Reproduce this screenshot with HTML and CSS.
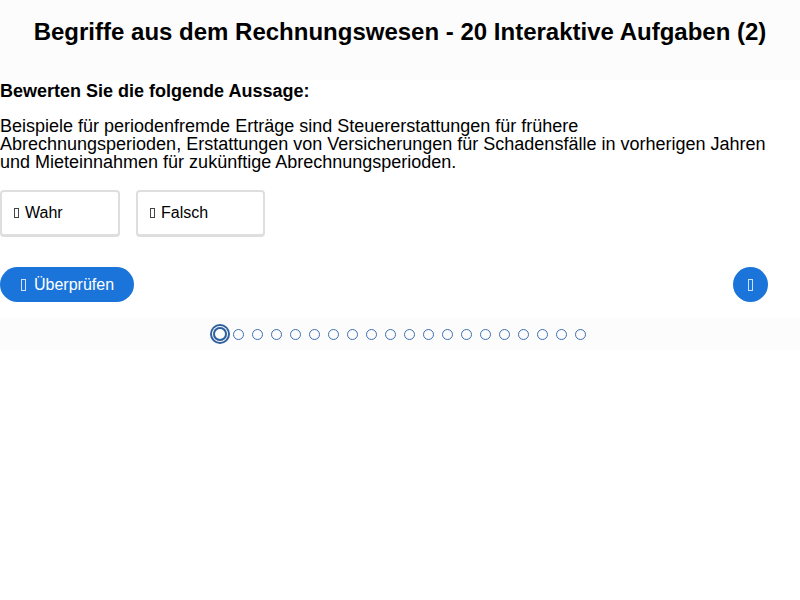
FILE: index.html
```html
<!DOCTYPE html>
<html lang="de">
<head>
    <meta charset="UTF-8">
    <meta name="viewport" content="width=device-width, initial-scale=1.0">
    <title>Begriffe aus dem Rechnungswesen</title>
    <link rel="stylesheet" href="styles.css">
</head>
<body>
    <header class="top">
        <h1>Begriffe aus dem Rechnungswesen - 20 Interaktive Aufgaben (2)</h1>
    </header>

    <main class="quiz">
        <h2 class="prompt">Bewerten Sie die folgende Aussage:</h2>
        <p class="statement">Beispiele für periodenfremde Erträge sind Steuererstattungen für frühere<br>Abrechnungsperioden, Erstattungen von Versicherungen für Schadensfälle in vorherigen Jahren<br>und Mieteinnahmen für zukünftige Abrechnungsperioden.</p>

        <div class="answers">
            <button class="answer"><span class="ico"></span>Wahr</button>
            <button class="answer"><span class="ico"></span>Falsch</button>
        </div>

        <div class="actions">
            <button class="check"><span class="ico light"></span>Überprüfen</button>
            <button class="next"><span class="ico light"></span></button>
        </div>
    </main>

    <nav class="dots">
        <span class="slot"><span class="dot active"></span></span>
        <span class="slot"><span class="dot"></span></span>
        <span class="slot"><span class="dot"></span></span>
        <span class="slot"><span class="dot"></span></span>
        <span class="slot"><span class="dot"></span></span>
        <span class="slot"><span class="dot"></span></span>
        <span class="slot"><span class="dot"></span></span>
        <span class="slot"><span class="dot"></span></span>
        <span class="slot"><span class="dot"></span></span>
        <span class="slot"><span class="dot"></span></span>
        <span class="slot"><span class="dot"></span></span>
        <span class="slot"><span class="dot"></span></span>
        <span class="slot"><span class="dot"></span></span>
        <span class="slot"><span class="dot"></span></span>
        <span class="slot"><span class="dot"></span></span>
        <span class="slot"><span class="dot"></span></span>
        <span class="slot"><span class="dot"></span></span>
        <span class="slot"><span class="dot"></span></span>
        <span class="slot"><span class="dot"></span></span>
        <span class="slot"><span class="dot"></span></span>
    </nav>
</body>
</html>
```

FILE: styles.css
```css
body {
    margin: 0;
    font-family: "Liberation Sans", Arial, sans-serif;
    color: #000;
    background: #fff;
}

.top {
    background: #fcfcfc;
    height: 80px;
    display: flex;
    align-items: center;
    justify-content: center;
}
.top h1 {
    margin: 0;
    font-size: 24px;
    font-weight: bold;
    margin-top: -16px;
}

.prompt {
    margin: 0;
    padding-top: 1px;
    font-size: 18px;
    line-height: 20px;
    font-weight: bold;
}

.statement {
    margin: 16px 0 0;
    font-size: 18px;
    line-height: 18px;
}

.answers {
    display: flex;
    gap: 16px;
    margin-top: 19px;
}
.answer {
    display: flex;
    align-items: center;
    height: 47px;
    padding: 0 12px;
    background: #fff;
    border: 2px solid #dedede;
    border-bottom-width: 3px;
    border-radius: 4px;
    font-family: inherit;
    font-size: 16px;
    color: #000;
}
.answer:first-child {
    width: 120px;
}
.answer:last-child {
    width: 129px;
}

.ico {
    display: inline-block;
    width: 3px;
    height: 8px;
    border: 1px solid #444;
    margin-right: 6px;
}
.ico.light {
    border-color: #cfe0f7;
    height: 10px;
}

.actions {
    display: flex;
    justify-content: space-between;
    align-items: center;
    margin-top: 30px;
    padding-right: 32px;
}
.check {
    display: flex;
    align-items: center;
    height: 35px;
    padding: 0 20px 0 21px;
    border: none;
    border-radius: 18px;
    background: #1b74d9;
    color: #fff;
    font-family: inherit;
    font-size: 16px;
}
.check .ico {
    margin-right: 8px;
}
.next {
    width: 35px;
    height: 35px;
    border: none;
    border-radius: 50%;
    background: #1b74d9;
    display: flex;
    align-items: center;
    justify-content: center;
    padding: 0;
}
.next .ico {
    margin: 0;
}

.dots {
    margin-top: 16px;
    height: 32px;
    background: #fcfcfc;
    display: flex;
    justify-content: center;
    align-items: center;
}
.slot {
    width: 19px;
    display: flex;
    justify-content: center;
}
.dot {
    width: 9px;
    height: 9px;
    border: 1px solid #3c6fb4;
    border-radius: 50%;
    box-sizing: content-box;
}
.dot.active {
    width: 10px;
    height: 10px;
    border: 2px solid #2f5f9c;
    box-shadow: 0 0 0 1px #fff, 0 0 0 3px #2f5f9c;
    flex-shrink: 0;
}
```
